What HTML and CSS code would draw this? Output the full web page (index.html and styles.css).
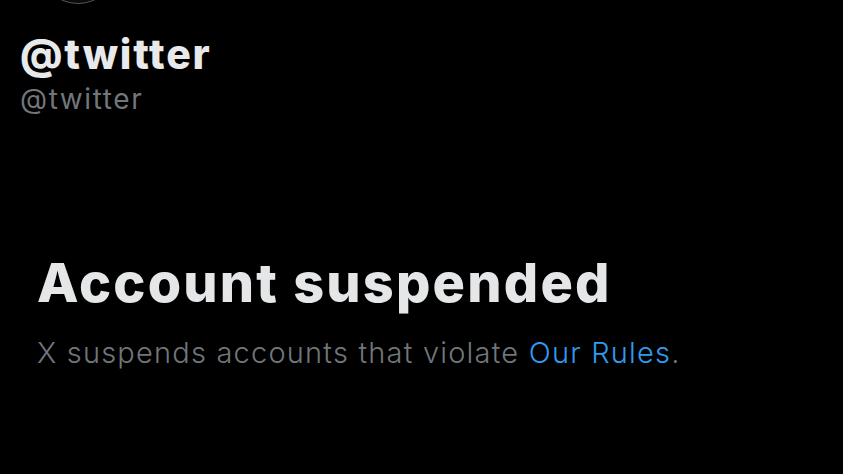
FILE: index.html
```html
<!DOCTYPE html>
<html>
<head>
<title>@twitter / X</title>
<link rel="stylesheet" href="styles.css">
</head>
<body>
<div class="profile">
	<div class="avatarEdge"></div>
	<div class="names">
		<div class="displayName">@twitter</div>
		<div class="handle">@twitter</div>
	</div>
	<div class="notice">
		<div class="title">Account suspended</div>
		<div class="desc">X suspends accounts that violate <a href="#">Our Rules</a>.</div>
	</div>
</div>
</body>
</html>
```
FILE: styles.css
```css
html,body{
	padding:0;
	margin:0;
	background-color:#000000;
	font-family:"Inter","Roboto",sans-serif;
	height:100%;
	overflow:hidden;
}
div.profile{
	display:flex;
	flex-direction:column;
}
div.avatarEdge{
	width:78px;
	height:78px;
	margin:-76px 0 0 38px;
	border-radius:50%;
	border:1px solid #555555;
	background-color:#0a0a0a;
}
div.names{
	padding:26px 0 0 20px;
}
div.displayName{
	color:#e7e9ea;
	font-weight:800;
	font-size:41px;
	line-height:48px;
	letter-spacing:1.8px;
}
div.handle{
	color:#71767b;
	font-size:28px;
	line-height:36px;
	margin-top:3px;
	letter-spacing:1.6px;
}
div.notice{
	padding:134px 0 0 37px;
}
div.title{
	color:#e4e6e7;
	font-weight:800;
	font-size:54px;
	line-height:64px;
	letter-spacing:2.2px;
}
div.desc{
	color:#71767b;
	font-size:29px;
	line-height:40px;
	font-weight:300;
	margin-top:18px;
	letter-spacing:1.2px;
}
div.desc a{
	color:#2f9bef;
	text-decoration:none;
}
```
